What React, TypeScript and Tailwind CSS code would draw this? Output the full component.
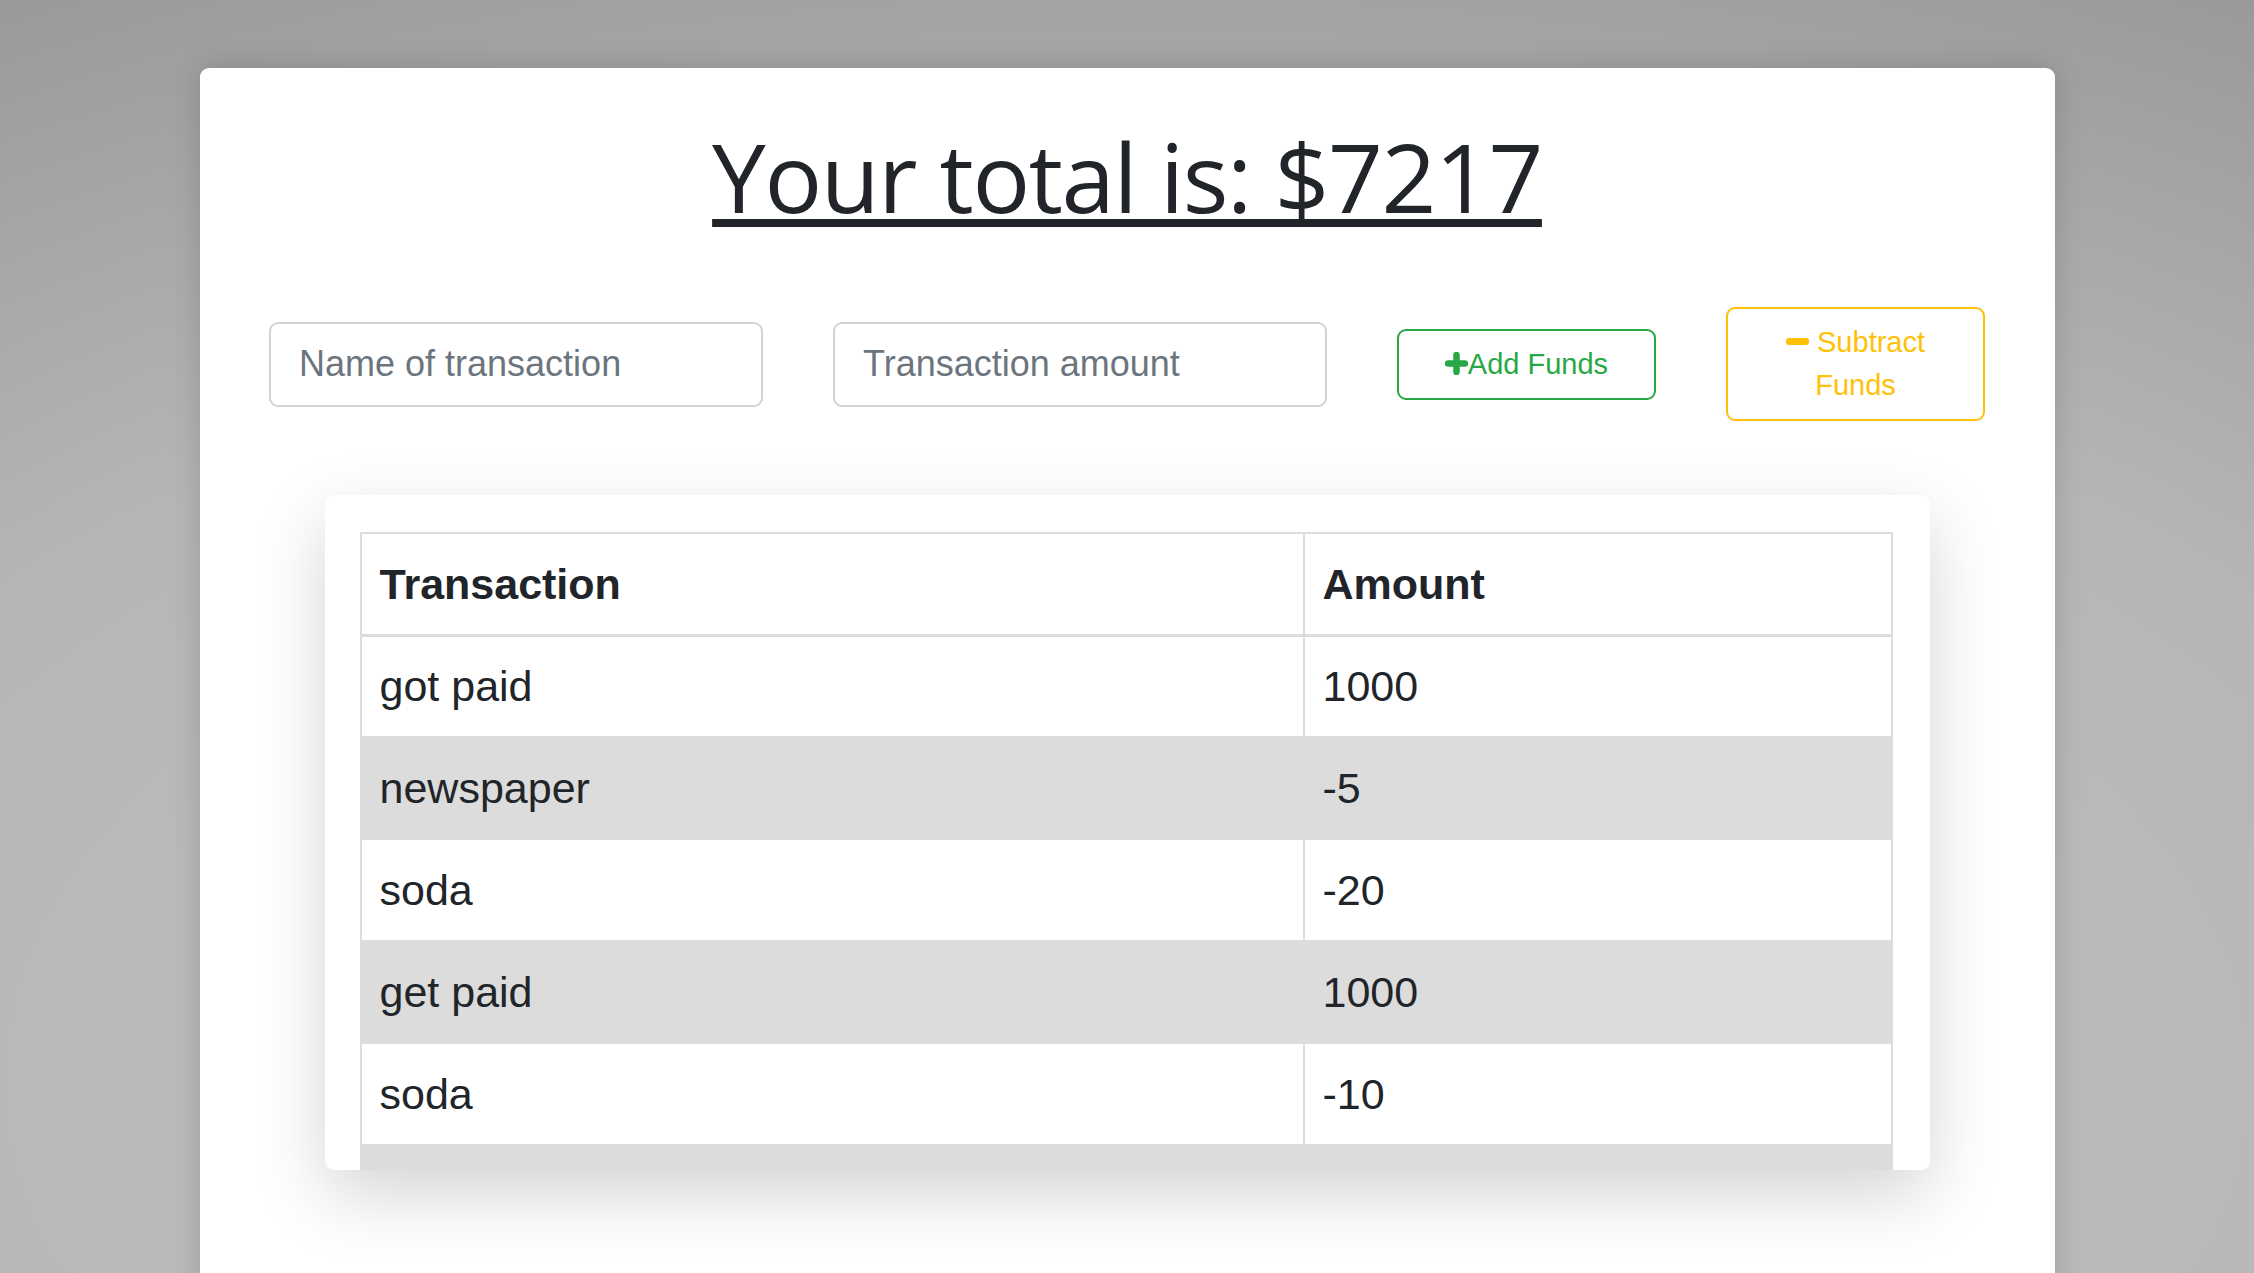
import type { ReactNode } from "react";

const rows = [
  { name: "got paid", amount: "1000" },
  { name: "newspaper", amount: "-5" },
  { name: "soda", amount: "-20" },
  { name: "get paid", amount: "1000" },
  { name: "soda", amount: "-10" },
  { name: "", amount: "" },
];

function PlusIcon() {
  return (
    <svg width="23" height="23" viewBox="0 0 23 23" className="inline-block -mt-[4px] align-middle">
      <path d="M11.5 3v17M3 11.5h17" stroke="#28a745" strokeWidth="6.5" strokeLinecap="round" />
    </svg>
  );
}

function MinusIcon() {
  return (
    <svg width="23" height="7" viewBox="0 0 23 7" className="inline-block -mt-[6px] align-middle">
      <rect x="0" y="0" width="23" height="7" rx="3" fill="#ffc107" />
    </svg>
  );
}

function Cell({ children, head }: { children: ReactNode; head?: boolean }) {
  return (
    <td
      className={`h-[102px] px-[18px] border-2 border-[#dcdcdc] align-middle ${
        head ? "font-bold border-b-[3px]" : ""
      }`}
    >
      {children}
    </td>
  );
}

export default function App() {
  return (
    <div className="h-[1273px] overflow-hidden bg-[radial-gradient(ellipse_115%_110%_at_50%_85%,#c4c4c4_0%,#b6b6b6_55%,#909090_100%)] pt-[68px]">
      <div className="mx-auto w-[1855px] h-[1300px] bg-white rounded-[9px] shadow-[0_0_30px_rgba(0,0,0,0.16)] pt-[60px] text-[#212529]">
        <div className="text-center">
          <h1
            className="inline-block text-[96px] leading-none tracking-[-1.4px] underline decoration-[8px] underline-offset-[6px]"
            style={{ fontFamily: '"Open Sans", sans-serif' }}
          >
            Your total is: $7217
          </h1>
        </div>

        <div
          className="mt-[83px] flex items-center justify-center gap-[70px]"
          style={{ fontFamily: '"Liberation Sans", Arial, sans-serif' }}
        >
          <input
            className="w-[494px] h-[85px] border-2 border-[#ced4da] rounded-[9px] px-[28px] text-[36px] placeholder:text-[#6c757d] outline-none"
            placeholder="Name of transaction"
          />
          <input
            className="w-[494px] h-[85px] border-2 border-[#ced4da] rounded-[9px] px-[28px] text-[36px] placeholder:text-[#6c757d] outline-none"
            placeholder="Transaction amount"
          />
          <button className="w-[259px] border-2 border-[#28a745] rounded-[9px] py-[12px] px-[18px] text-[29px] leading-[43px] text-[#28a745]">
            <PlusIcon />
            Add Funds
          </button>
          <button className="w-[259px] border-2 border-[#ffc107] rounded-[9px] py-[12px] px-[18px] text-[29px] leading-[43px] text-[#ffc107]">
            <MinusIcon /> Subtract Funds
          </button>
        </div>

        <div className="mx-auto mt-[74px] w-[1605px] h-[675px] overflow-hidden bg-white rounded-[9px] shadow-[0_25px_70px_rgba(0,0,0,0.17)] pl-[35px] pr-[37px] pt-[37px]">
          <table
            className="w-full border-collapse text-[43px] text-[#212529]"
            style={{ fontFamily: '"Liberation Sans", Arial, sans-serif' }}
          >
            <colgroup>
              <col className="w-[943px]" />
              <col />
            </colgroup>
            <thead>
              <tr>
                <Cell head>Transaction</Cell>
                <Cell head>Amount</Cell>
              </tr>
            </thead>
            <tbody>
              {rows.map((r, i) => (
                <tr key={i} className={i % 2 === 1 ? "bg-[#dcdcdc]" : "bg-white"}>
                  <Cell>{r.name}</Cell>
                  <Cell>{r.amount}</Cell>
                </tr>
              ))}
            </tbody>
          </table>
        </div>
      </div>
    </div>
  );
}
